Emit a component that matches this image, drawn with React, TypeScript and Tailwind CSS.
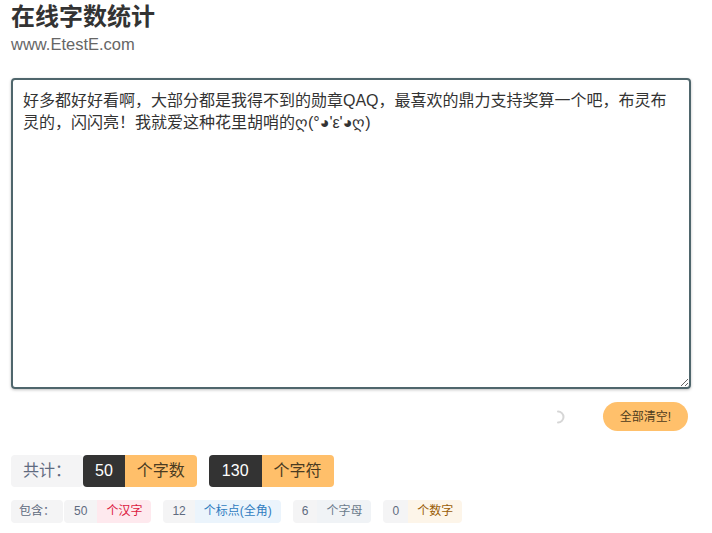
import { useState } from 'react';

const SAMPLE =
  "好多都好好看啊，大部分都是我得不到的勋章QAQ，最喜欢的鼎力支持奖算一个吧，布灵布灵的，闪闪亮！我就爱这种花里胡哨的ღ(°◕'ε'◕ღ)";

const details = [
  { num: 50, label: '个汉字', cls: 'bg-[#fee9ee] text-[#dc1a40]' },
  { num: 12, label: '个标点(全角)', cls: 'bg-[#ebf4fc] text-[#2f7cc0]' },
  { num: 6, label: '个字母', cls: 'bg-[#f0f3f6] text-[#6b7b8c]' },
  { num: 0, label: '个数字', cls: 'bg-[#fdf5e9] text-[#9a5d06]' },
];

export default function App() {
  const [text, setText] = useState(SAMPLE);

  return (
    <div className="min-h-screen bg-white pl-[11px] pr-[21px] font-['Liberation_Sans','Noto_Sans_CJK_SC',sans-serif] text-[#333]">
      {/* header */}
      <h1 className="pt-[1px] text-[24px] font-bold leading-[32px] text-[#333]">在线字数统计</h1>
      <div className="text-[16.5px] leading-[22px] text-[#666]">www.EtestE.com</div>

      {/* input */}
      <textarea
        value={text}
        onChange={(e) => setText(e.target.value)}
        className="mt-[23px] block h-[311px] w-full rounded-[4px] border-2 border-[#4f666c] p-[10px] text-[16px] leading-[22px] text-[#333] shadow-[0_1px_3px_rgba(0,0,0,0.25)] outline-none"
      />

      <div className="mt-[13px] flex items-center justify-end gap-[40px] pr-[3px]">
        <svg width="14" height="14" viewBox="0 0 14 14" fill="none" className="mr-[-2px]">
          <path d="M7 1.5 A5.5 5.5 0 0 1 7 12.5" stroke="#d6d6d6" strokeWidth="2" strokeLinecap="round" />
        </svg>
        <button
          onClick={() => setText('')}
          className="h-[29px] rounded-full bg-[#ffc06b] px-[17px] text-[12px] text-[#4d3b1c]"
        >
          全部清空!
        </button>
      </div>

      {/* totals */}
      <div className="mt-[24px] flex items-center gap-3 text-[16px] leading-[32px]">
        <div className="flex">
          <span className="rounded-[4px] bg-[#f4f4f5] px-3 text-[#5f6b80]">共计：</span>
          <span className="rounded-l-[4px] bg-[#333] px-3 text-white">50</span>
          <span className="rounded-r-[4px] bg-[#ffbf6a] px-3 text-[#4a3b22]">个字数</span>
        </div>
        <div className="flex">
          <span className="rounded-l-[4px] bg-[#333] px-[13px] text-white">130</span>
          <span className="rounded-r-[4px] bg-[#ffbf6a] px-3 text-[#4a3b22]">个字符</span>
        </div>
      </div>

      {/* breakdown */}
      <div className="mt-[13px] flex items-center gap-3 text-[12px] leading-[23px]">
        <div className="flex">
          <span className="mr-[1px] rounded-[4px] bg-[#f4f4f5] px-2 text-[#5f6b80]">包含：</span>
          <span className="rounded-l-[4px] bg-[#f4f4f5] px-[10px] text-[#5f6b80]">{details[0].num}</span>
          <span className={`rounded-r-[4px] px-[9px] ${details[0].cls}`}>{details[0].label}</span>
        </div>
        {details.slice(1).map((d) => (
          <div key={d.label} className="flex">
            <span className="rounded-l-[4px] bg-[#f4f4f5] px-[9px] text-[#5f6b80]">{d.num}</span>
            <span className={`rounded-r-[4px] px-[9px] ${d.cls}`}>{d.label}</span>
          </div>
        ))}
      </div>
    </div>
  );
}
